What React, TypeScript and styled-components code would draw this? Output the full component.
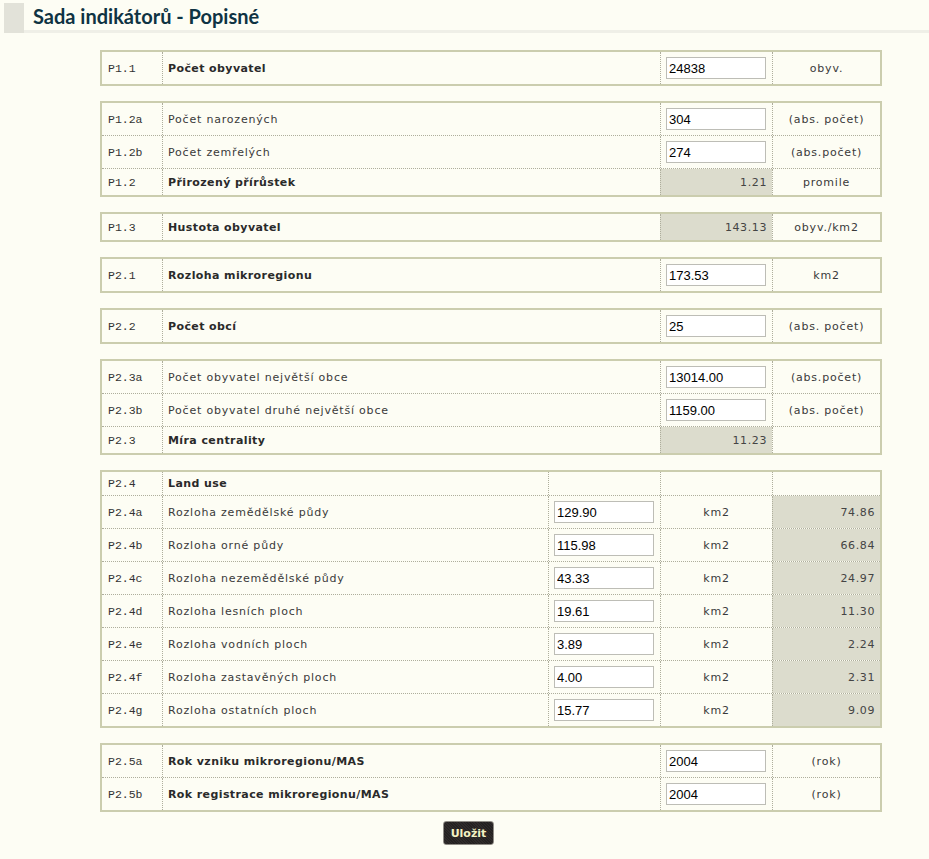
import React from "react";
import styled, { createGlobalStyle } from "styled-components";

const GlobalStyle = createGlobalStyle`
  html, body {
    margin: 0;
    padding: 0;
    background: #fdfdf4;
  }
  body {
    font-family: "DejaVu Sans", Verdana, sans-serif;
    font-size: 11px;
    color: #333;
  }
`;

const Page = styled.div`
  width: 929px;
  min-height: 859px;
  padding-top: 3px;
  box-sizing: border-box;
`;

const Header = styled.div`
  display: flex;
  align-items: stretch;
  margin-left: 4px;
  height: 27px;
  border-bottom: 3px solid #efefe7;
`;

const HeaderBlock = styled.div`
  width: 20px;
  background: #e2e2d9;
  margin-bottom: -3px;
`;

const Title = styled.h1`
  margin: 0 0 0 9px;
  font-family: Lato, "Open Sans", sans-serif;
  font-weight: 700;
  font-size: 20px;
  line-height: 26px;
  color: #0f3343;
`;

const Content = styled.div`
  margin: 17px 0 0 100px;
  width: 782px;
  display: flex;
  flex-direction: column;
  gap: 15px;
`;

const Group = styled.div`
  border: 2px solid #cbcdae;
  background: #fdfdf4;
`;

const Row = styled.div<{ $cols: string; $height: number }>`
  display: grid;
  grid-template-columns: ${(p) => p.$cols};
  height: ${(p) => p.$height}px;
  & + & {
    border-top: 1px dotted #aeae9c;
  }
`;

const Cell = styled.div<{ $align?: string; $shaded?: boolean }>`
  display: flex;
  align-items: center;
  justify-content: ${(p) => p.$align || "flex-start"};
  padding: 0 5px;
  border-left: 1px dotted #aeae9c;
  background: ${(p) => (p.$shaded ? "#dcdccd" : "transparent")};
  white-space: nowrap;
  overflow: hidden;
`;

const CodeCell = styled(Cell)`
  border-left: none;
  padding-left: 6px;
  font-family: "Liberation Mono", "Courier New", monospace;
  font-size: 11.5px;
  color: #333;
`;

const Label = styled.span<{ $bold?: boolean }>`
  font-weight: ${(p) => (p.$bold ? 700 : 400)};
  letter-spacing: ${(p) => (p.$bold ? 0.4 : 0.8)}px;
  color: ${(p) => (p.$bold ? "#2a2a2a" : "#3a3a3a")};
`;

const Input = styled.input`
  width: 100px;
  height: 22px;
  box-sizing: border-box;
  border: 1px solid #bdbdb6;
  background: #fff;
  padding: 0 2px;
  font-family: "Liberation Sans", Arial, sans-serif;
  font-size: 13px;
  color: #000;
  outline: none;
`;

const Value = styled.span`
  color: #444;
  letter-spacing: 0.6px;
`;

const Footer = styled.div`
  display: flex;
  justify-content: center;
  padding-left: 8px;
  margin-top: 9px;
`;

const SaveButton = styled.button`
  width: 51px;
  height: 24px;
  border: 1px solid #8f8c86;
  border-radius: 3px;
  background: repeating-linear-gradient(
    45deg,
    #2f2b2b 0px,
    #2f2b2b 1px,
    #242121 1px,
    #242121 2px
  );
  color: #f3f2c4;
  font-family: "DejaVu Sans", Verdana, sans-serif;
  font-weight: 700;
  font-size: 11px;
  cursor: pointer;
  padding: 0;
`;

type Item = {
  code: string;
  label: string;
  bold?: boolean;
  input?: string;
  value?: string;
  unit?: string;
};

const MAIN_COLS = "60px 498px 112px 108px";
const LAND_COLS = "60px 386px 112px 112px 108px";
const INPUT_ROW = 32;
const TEXT_ROW = 26;

const groups: Item[][] = [
  [{ code: "P1.1", label: "Počet obyvatel", bold: true, input: "24838", unit: "obyv." }],
  [
    { code: "P1.2a", label: "Počet narozených", input: "304", unit: "(abs. počet)" },
    { code: "P1.2b", label: "Počet zemřelých", input: "274", unit: "(abs.počet)" },
    { code: "P1.2", label: "Přirozený přírůstek", bold: true, value: "1.21", unit: "promile" },
  ],
  [{ code: "P1.3", label: "Hustota obyvatel", bold: true, value: "143.13", unit: "obyv./km2" }],
  [{ code: "P2.1", label: "Rozloha mikroregionu", bold: true, input: "173.53", unit: "km2" }],
  [{ code: "P2.2", label: "Počet obcí", bold: true, input: "25", unit: "(abs. počet)" }],
  [
    { code: "P2.3a", label: "Počet obyvatel největší obce", input: "13014.00", unit: "(abs.počet)" },
    { code: "P2.3b", label: "Počet obyvatel druhé největší obce", input: "1159.00", unit: "(abs. počet)" },
    { code: "P2.3", label: "Míra centrality", bold: true, value: "11.23", unit: "" },
  ],
];

const landUse: Item[] = [
  { code: "P2.4a", label: "Rozloha zemědělské půdy", input: "129.90", unit: "km2", value: "74.86" },
  { code: "P2.4b", label: "Rozloha orné půdy", input: "115.98", unit: "km2", value: "66.84" },
  { code: "P2.4c", label: "Rozloha nezemědělské půdy", input: "43.33", unit: "km2", value: "24.97" },
  { code: "P2.4d", label: "Rozloha lesních ploch", input: "19.61", unit: "km2", value: "11.30" },
  { code: "P2.4e", label: "Rozloha vodních ploch", input: "3.89", unit: "km2", value: "2.24" },
  { code: "P2.4f", label: "Rozloha zastavěných ploch", input: "4.00", unit: "km2", value: "2.31" },
  { code: "P2.4g", label: "Rozloha ostatních ploch", input: "15.77", unit: "km2", value: "9.09" },
];

const mas: Item[] = [
  { code: "P2.5a", label: "Rok vzniku mikroregionu/MAS", bold: true, input: "2004", unit: "(rok)" },
  { code: "P2.5b", label: "Rok registrace mikroregionu/MAS", bold: true, input: "2004", unit: "(rok)" },
];

const MainRow = ({ item }: { item: Item }) => (
  <Row $cols={MAIN_COLS} $height={item.input !== undefined ? INPUT_ROW : TEXT_ROW}>
    <CodeCell>{item.code}</CodeCell>
    <Cell>
      <Label $bold={item.bold}>{item.label}</Label>
    </Cell>
    {item.input !== undefined ? (
      <Cell>
        <Input defaultValue={item.input} />
      </Cell>
    ) : (
      <Cell $align="flex-end" $shaded>
        <Value>{item.value}</Value>
      </Cell>
    )}
    <Cell $align="center">
      <Label>{item.unit}</Label>
    </Cell>
  </Row>
);

const LandRow = ({ item }: { item: Item }) => (
  <Row $cols={LAND_COLS} $height={INPUT_ROW}>
    <CodeCell>{item.code}</CodeCell>
    <Cell>
      <Label>{item.label}</Label>
    </Cell>
    <Cell>
      <Input defaultValue={item.input} />
    </Cell>
    <Cell $align="center">
      <Label>{item.unit}</Label>
    </Cell>
    <Cell $align="flex-end" $shaded>
      <Value>{item.value}</Value>
    </Cell>
  </Row>
);

export default function App() {
  return (
    <Page>
      <GlobalStyle />
      <Header>
        <HeaderBlock />
        <Title>Sada indikátorů - Popisné</Title>
      </Header>
      <Content>
        {groups.map((g, i) => (
          <Group key={i}>
            {g.map((item) => (
              <MainRow key={item.code} item={item} />
            ))}
          </Group>
        ))}
        <Group>
          <Row $cols={LAND_COLS} $height={23}>
            <CodeCell>P2.4</CodeCell>
            <Cell>
              <Label $bold>Land use</Label>
            </Cell>
            <Cell />
            <Cell />
            <Cell />
          </Row>
          {landUse.map((item) => (
            <LandRow key={item.code} item={item} />
          ))}
        </Group>
        <Group>
          {mas.map((item) => (
            <MainRow key={item.code} item={item} />
          ))}
        </Group>
      </Content>
      <Footer>
        <SaveButton>Uložit</SaveButton>
      </Footer>
    </Page>
  );
}
